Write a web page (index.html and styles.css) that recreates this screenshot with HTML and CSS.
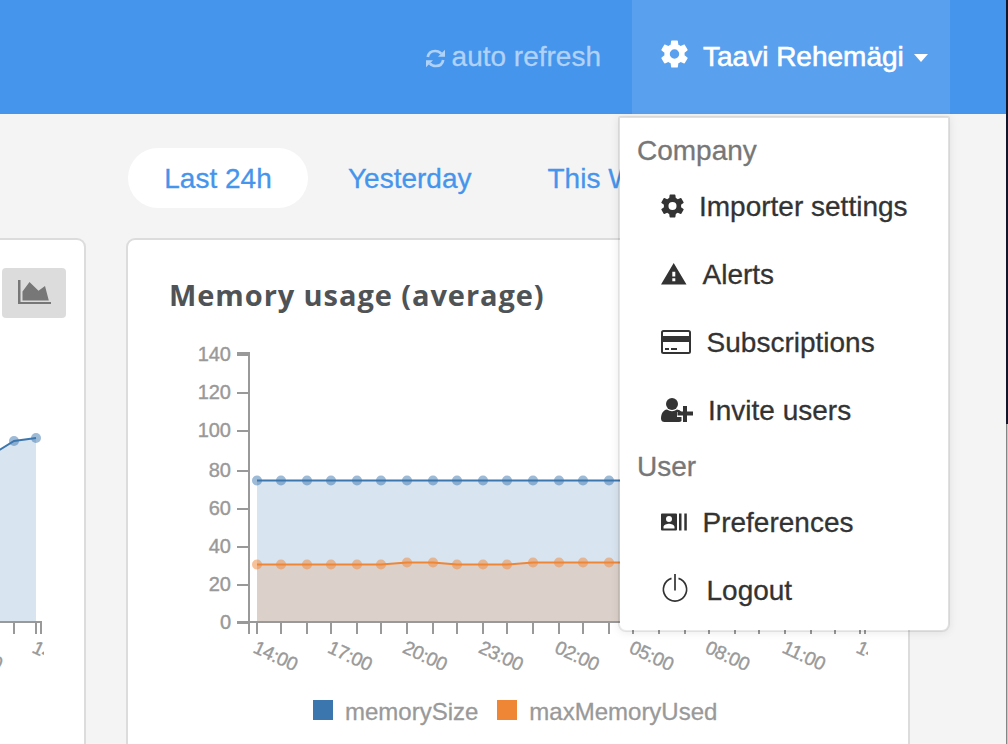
FILE: index.html
```html
<!DOCTYPE html>
<html lang="en">
<head>
<meta charset="utf-8">
<title>Dashboard</title>
<link rel="stylesheet" href="styles.css">
</head>
<body>
<svg class="defs" aria-hidden="true">
  <symbol id="gear" viewBox="2 2 20 20"><path d="M19.43 12.98c.04-.32.07-.64.07-.98s-.03-.66-.07-.98l2.11-1.65c.19-.15.24-.42.12-.64l-2-3.46c-.12-.22-.39-.3-.61-.22l-2.49 1c-.52-.4-1.08-.73-1.69-.98l-.38-2.65A.49.49 0 0 0 14 2h-4c-.25 0-.46.18-.49.42l-.38 2.65c-.61.25-1.17.59-1.69.98l-2.49-1c-.23-.09-.49 0-.61.22l-2 3.46c-.13.22-.07.49.12.64l2.11 1.65c-.04.32-.07.65-.07.98s.03.66.07.98l-2.11 1.65c-.19.15-.24.42-.12.64l2 3.46c.12.22.39.3.61.22l2.49-1c.52.4 1.08.73 1.69.98l.38 2.65c.03.24.24.42.49.42h4c.25 0 .46-.18.49-.42l.38-2.65c.61-.25 1.17-.59 1.69-.98l2.49 1c.23.09.49 0 .61-.22l2-3.46c.12-.22.07-.49-.12-.64zM12 15.5a3.5 3.5 0 1 1 0-7 3.5 3.5 0 0 1 0 7z"/></symbol>
</svg>
<div class="page">
  <header class="topbar">
    <a class="refresh">
      <svg width="19" height="19" viewBox="0 0 19 19"><path fill="none" stroke="currentColor" stroke-width="2.700" d="M1.800 8C2.500 4 5.600 2 9.200 2c2.600 0 4.500 1 6 2.700M17.200 11c-.7 4-3.800 6-7.400 6-2.600 0-4.500-1-6-2.700"/><path fill="currentColor" d="M19 .8v7h-7zM0 18.200v-7h7z"/></svg>
      <span>auto refresh</span>
    </a>
    <div class="account">
      <svg class="gear" width="27" height="28"><use href="#gear"/></svg>
      <span class="name">Taavi Rehemägi</span>
      <i class="caret"></i>
      <div class="menu">
        <h4>Company</h4>
        <a><svg width="26" height="24" viewBox="0 0 26 24"><use href="#gear" x="0" y="0" width="23" height="24"/></svg>Importer settings</a>
        <a><svg width="29.500" height="24" viewBox="0 0 29.500 24"><path fill-rule="evenodd" d="M12.700 1 25.500 22.500H0zM11.300 9.800v4.700h3V9.800zm0 6.500v3h3v-3z"/></svg>Alerts</a>
        <a><svg width="33.600" height="24" viewBox="0 0 33.600 24"><rect x="1" y="1" width="28" height="22" rx="1.500" fill="none" stroke="currentColor" stroke-width="2"/><path d="M1 6h28v6H1zM4 18h4v2H4zM10 18h6v2h-6z"/></svg>Subscriptions</a>
        <a><svg width="35" height="24" viewBox="0 0 35 24"><circle cx="11" cy="6" r="6"/><path d="M6 11.500C2 12 0 16 0 20.500 0 23 1.500 24 3.500 24H18q1.500 0 2.500-1V19h-4.500v-5h4.500q-1.500-2.500-4.500-2.500Q11 15 6 11.500z"/><path d="M22 8h4v5.500h6v4h-6V24h-4v-6.500h-5.500v-4H22z"/></svg>Invite users</a>
        <h4>User</h4>
        <a><svg width="29.500" height="24" viewBox="0 0 29.500 24"><path fill-rule="evenodd" d="M1 3.500h14q1 0 1 1v15q0 1-1 1H1q-1 0-1-1v-15q0-1 1-1zM8 6a3 3 0 1 0 0 6 3 3 0 0 0 0-6zM2.500 18.500h11v-1.500c0-2-3.500-3.200-5.500-3.200s-5.500 1.200-5.500 3.200z"/><path d="M18 3.500h2.500v17H18zM23.300 3.500h2.500v17h-2.500z"/></svg>Preferences</a>
        <a><svg width="33.500" height="32" viewBox="0 0 33.500 32" class="power"><path fill="none" stroke="currentColor" stroke-width="1.700" d="M10.500 5.400A11.600 11.600 0 1 0 17.500 5.400M14 1v16.500"/></svg>Logout</a>
      </div>
    </div>
  </header>
  <nav class="tabs"><a class="active">Last 24h</a><a>Yesterday</a><a>This Week</a></nav>
  <main class="cards">
    <section class="card first">
      <button class="toggle" aria-label="Area chart"><svg width="34" height="24" viewBox="0 0 34 24"><path d="M0 0h2.500v22H33v2H0zM4.500 20.500V11.500L11.500 2l9 8.800L27 6l3.800 14.500z"/></svg></button>
      <svg class="chart" width="50" height="330" viewBox="0 350 50 330">
        <path class="area-a" d="M-12 457 14 441 36 438V621H-12z"/>
        <path class="line-a" d="M-12 457 14 441 36 438"/>
        <g class="dots-a"><circle cx="14" cy="441" r="5"/><circle cx="36" cy="438" r="5"/></g>
        <path class="axis" d="M0 622H41V634M14 622V634M36 622V634"/>
        <g class="labels x"><text transform="translate(-42 652)rotate(25)">11:00</text></g>
        <svg x="0" y="630" width="44" height="60" viewBox="0 630 44 60"><g class="labels x"><text transform="translate(31 652)rotate(25)">14:00</text></g></svg>
      </svg>
    </section>
    <section class="card second">
      <h2>Memory usage (average)</h2>
      <svg class="chart" width="690" height="340" viewBox="190 340 690 340">
        <path class="area-a" d="M257 480.500H860V621H257z"/>
        <path class="area-b" d="M257 564.500H381L407 562.500H433L457 564.500H507L533 562.500H860V621H257z"/>
        <path class="line-a" d="M257 480.500H860"/>
        <path class="line-b" d="M257 564.500H381L407 562.500H433L457 564.500H507L533 562.500H860"/>
        <g class="dots-a"><circle cx="257" cy="480.500" r="5"/><circle cx="281" cy="480.500" r="5"/><circle cx="307" cy="480.500" r="5"/><circle cx="331" cy="480.500" r="5"/><circle cx="357" cy="480.500" r="5"/><circle cx="381" cy="480.500" r="5"/><circle cx="407" cy="480.500" r="5"/><circle cx="433" cy="480.500" r="5"/><circle cx="457" cy="480.500" r="5"/><circle cx="483" cy="480.500" r="5"/><circle cx="507" cy="480.500" r="5"/><circle cx="533" cy="480.500" r="5"/><circle cx="559" cy="480.500" r="5"/><circle cx="583" cy="480.500" r="5"/><circle cx="609" cy="480.500" r="5"/></g>
        <g class="dots-b"><circle cx="257" cy="564.500" r="5"/><circle cx="281" cy="564.500" r="5"/><circle cx="307" cy="564.500" r="5"/><circle cx="331" cy="564.500" r="5"/><circle cx="357" cy="564.500" r="5"/><circle cx="381" cy="564.500" r="5"/><circle cx="407" cy="562.500" r="5"/><circle cx="433" cy="562.500" r="5"/><circle cx="457" cy="564.500" r="5"/><circle cx="483" cy="564.500" r="5"/><circle cx="507" cy="564.500" r="5"/><circle cx="533" cy="562.500" r="5"/><circle cx="559" cy="562.500" r="5"/><circle cx="583" cy="562.500" r="5"/><circle cx="609" cy="562.500" r="5"/></g>
        <path class="axis" d="M237 353H249V634M237 355H249M237 393H249M237 431H249M237 471H249M237 509H249M237 547H249M237 585H249M237 623H249M237 622H865V634M257 622V634M281 622V634M307 622V634M331 622V634M357 622V634M381 622V634M407 622V634M433 622V634M457 622V634M483 622V634M507 622V634M533 622V634M559 622V634M583 622V634M609 622V634M633 622V634M659 622V634M685 622V634M709 622V634M735 622V634M759 622V634M785 622V634M811 622V634M835 622V634M860 622V634"/>
        <g class="labels y"><text x="231" y="361">140</text><text x="231" y="399">120</text><text x="231" y="437">100</text><text x="231" y="477">80</text><text x="231" y="515">60</text><text x="231" y="553">40</text><text x="231" y="591">20</text><text x="231" y="629">0</text></g>
        <g class="labels x">
          <text transform="translate(252 652)rotate(25)">14:00</text>
          <text transform="translate(326.500 652)rotate(25)">17:00</text>
          <text transform="translate(401.500 652)rotate(25)">20:00</text>
          <text transform="translate(477.500 652)rotate(25)">23:00</text>
          <text transform="translate(553.500 652)rotate(25)">02:00</text>
          <text transform="translate(628 652)rotate(25)">05:00</text>
          <text transform="translate(704 652)rotate(25)">08:00</text>
          <text transform="translate(781 652)rotate(25)">11:00</text>
        </g>
        <svg x="840" y="630" width="28" height="50" viewBox="840 630 28 50"><g class="labels x"><text transform="translate(855 652)rotate(25)">14:00</text></g></svg>
      </svg>
      <div class="legend"><i class="blue"></i><span>memorySize</span><i class="orange"></i><span>maxMemoryUsed</span></div>
    </section>
  </main>
</div>
<div class="edge"></div>
</body>
</html>
```
FILE: styles.css
```css
* { box-sizing: border-box; }
body {
  margin: 0;
  width: 1008px;
  height: 744px;
  overflow: hidden;
  display: flex;
  background: #f4f4f4;
  font: 28px/32px "Liberation Sans", Arial, sans-serif;
  -webkit-text-stroke: .3px currentColor;
}
.defs { position: absolute; width: 0; height: 0; }
.page { width: 1006px; height: 744px; overflow: hidden; }
.edge { width: 2px; height: 744px; background: linear-gradient(#15152a 424px, transparent 424px), linear-gradient(90deg, #858585 50%, #c8c8c8 50%); }

.topbar {
  height: 114px;
  display: flex;
  justify-content: flex-end;
  padding-right: 56px;
  background: #4695ec;
}
.refresh { display: flex; align-items: center; gap: 7px; padding-right: 31px; color: #b1d2f7; }
.refresh svg { margin-top: 2px; }
.account {
  position: relative;
  width: 318px;
  display: flex;
  align-items: center;
  padding-left: 29px;
  background: #59a0ee;
  color: #fff;
}
.gear { fill: currentColor; margin: 0 15px 6px 0; }
.name { -webkit-text-stroke: .6px currentColor; white-space: nowrap; }
.caret { margin: 1px 0 0 10px; border: 7px solid transparent; border-top: 8px solid #fff; border-bottom: 0; }
.menu {
  position: absolute;
  z-index: 2;
  left: -14px;
  top: 116px;
  width: 332px;
  height: 516px;
  padding: 10px 0 6px;
  background: #fff;
  background-clip: padding-box;
  border: 2px solid rgba(0, 0, 0, .08);
  border-radius: 2px 2px 8px 8px;
  box-shadow: 0 1px 8px rgba(0, 0, 0, .08);
  color: #333;
}
.menu h4 { margin: 0; height: 44px; padding: 1px 0 0 17px; font-size: 28px; font-weight: 400; line-height: 44px; color: #777; }
.menu a { display: flex; align-items: center; gap: 12px; height: 68px; padding: 1px 0 0 41px; line-height: 34px; }
.menu svg { fill: currentColor; margin-top: -1px; }
.menu .power { margin-top: -4px; }

.tabs { display: flex; height: 94px; padding: 34px 0 0 128px; gap: 40px; color: #4695ec; line-height: 61px; white-space: nowrap; }
.tabs a:nth-child(2) { margin-right: 36px; }
.active { width: 180px; height: 60px; border-radius: 30px; background: #fff; text-align: center; }

.cards { display: flex; gap: 40px; padding-top: 30px; }
.card { height: 520px; border: 2px solid #dcdcdc; border-radius: 9px; background: #fff; }
.first { width: 86px; border-left: 0; border-top-left-radius: 0; }
.second { width: 784px; padding-top: 33px; }
.toggle { display: flex; align-items: center; justify-content: center; width: 64px; height: 50px; margin: 28px 0 32px 2px; padding: 0 0 2px 2px; border: 0; border-radius: 4px; background: #dcdcdc; }
.toggle svg { fill: #777; }
h2 { margin: 0 0 0 41px; height: 44px; font: 700 29px/44px "Open Sans", "Noto Sans", sans-serif; letter-spacing: .93px; color: #4f5356; white-space: nowrap; -webkit-text-stroke: 0; }
.chart { display: block; }
.second .chart { margin: 23px 0 0 62px; }
.area-a { fill: #3b76af; opacity: .2; }
.area-b { fill: #ef8636; opacity: .2; }
.line-a, .line-b { fill: none; stroke: #3b76af; stroke-width: 2; }
.line-b { stroke: #ef8636; }
.dots-a { fill: #3b76af; fill-opacity: .5; }
.dots-b { fill: #ef8636; fill-opacity: .5; }
.axis { fill: none; stroke: #999; stroke-width: 2; }
.labels { font-size: 20px; fill: #999; stroke: #999; stroke-width: .4px; }
.x { font-size: 19px; letter-spacing: -.3px; }
.y { text-anchor: end; }
.legend { display: flex; align-items: center; height: 60px; padding: 3px 0 0 185px; font-size: 24px; color: #999; }
.legend i { width: 20px; height: 20px; margin: -3px 12px 0 0; }
.legend span { margin-right: 19px; }
.blue { background: #3b76af; }
.orange { background: #ef8636; }
```
